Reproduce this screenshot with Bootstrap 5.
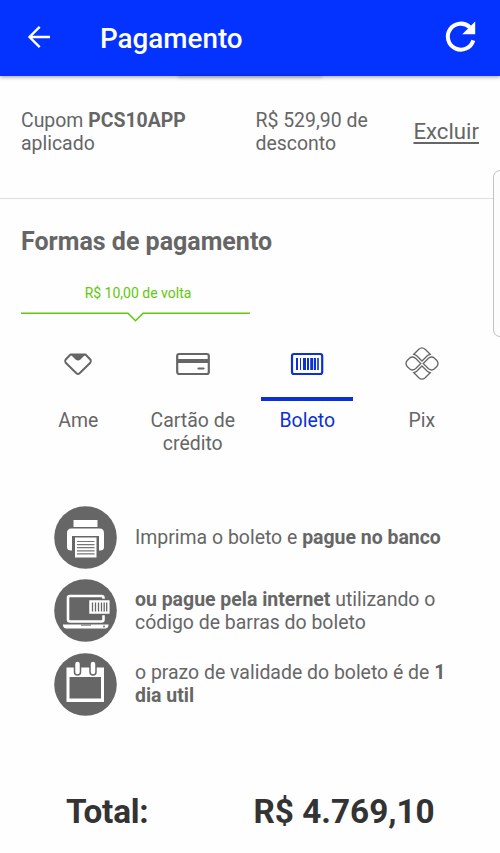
<!DOCTYPE html>
<html lang="pt-BR">
<head>
<meta charset="utf-8">
<meta name="viewport" content="width=device-width, initial-scale=1">
<title>Pagamento</title>
<link href="https://cdn.jsdelivr.net/npm/bootstrap@5.3.0/dist/css/bootstrap.min.css" rel="stylesheet">
<style>
body{font-family:Roboto,"Liberation Sans",sans-serif;font-size:19.45px;line-height:23px;color:#666;background:#fefefe;height:853px;overflow:hidden}
b{font-weight:700}
svg{display:block}
.topbar{height:75.5px;background:#0433ff;padding:0 23px 0 26px;box-shadow:0 1px 4px rgba(0,0,0,.4)}
.topbar h1{font-size:27.8px;font-weight:500;line-height:32px;margin:2px 0 0 48px}
.topbar .reload{margin-top:-1px}
.tab-shade{left:178px;top:75px;width:144px;height:3px;background:rgba(0,0,0,.16);filter:blur(1.5px)}
.coupon{height:123.5px;padding:33.4px 21px 0;border-bottom:1px solid #dedede}
.coupon-code{width:234.5px}
.coupon-off{width:158px}
.remove-link{font-size:22.2px;line-height:26px;color:#666;margin-top:9px;text-underline-offset:2.5px;text-decoration-thickness:1.5px}
.pay{padding:29px 21px 0}
.pay h2{font-size:25px;line-height:28px;font-weight:700;margin:0}
.cashback{width:229px;margin-top:29px;color:#63c70c;font-size:14px;line-height:16px}
.cashback span{padding-left:5px}
.methods{margin-top:20.5px}
.method{height:108px;color:#666}
.method-icon{height:55.5px;flex:none;border-bottom:4px solid transparent;width:80%}
.method.active{color:#0a31d8}
.method.active .method-icon{border-color:#0a31d8}
.steps{padding:47.2px 20px 0 54px}
.step{height:73.5px}
.step svg{margin-right:18px}
.total{font-size:33.3px;line-height:40px;font-weight:700;color:#333;margin-top:71.3px;padding-left:66px}
.total span:first-child{width:187.5px;letter-spacing:-.25px}
.edge-panel{left:493px;top:170px;width:20px;height:167px;border:1px solid #c2c2c2;border-radius:7px;background:#fcfcfc}
</style>
<script src="https://cdn.jsdelivr.net/npm/bootstrap@5.3.0/dist/js/bootstrap.bundle.min.js"></script>
</head>
<body class="position-relative">
<header class="topbar d-flex align-items-center text-white position-relative">
  <svg width="26" height="26" viewBox="0 0 26 26" fill="none" stroke="#fff" stroke-width="2.4"><path d="M24 12H3.500M13.700 1.800L3.500 12L13.700 22.200"/></svg>
  <h1>Pagamento</h1>
  <svg class="reload ms-auto" width="34" height="34" viewBox="0 0 34 34"><path d="M30.300 20.400A13 13 0 1 1 26.800 7.200" fill="none" stroke="#fff" stroke-width="4"/><path d="M32.200 1.500V14.200H19.200Z" fill="#fff"/></svg>
</header>
<div class="tab-shade position-absolute"></div>
<main>
  <section class="coupon d-flex align-items-start">
    <div class="coupon-code">Cupom <b>PCS10APP</b><br>aplicado</div>
    <div class="coupon-off">R$ 529,90 de<br>desconto</div>
    <a class="remove-link" href="#">Excluir</a>
  </section>
  <section class="pay">
    <h2>Formas de pagamento</h2>
    <div class="cashback text-center"><span>R$ 10,00 de volta</span>
      <svg class="mt-2" width="229" height="16" viewBox="0 0 229 16" fill="none" stroke="#63c70c" stroke-width="1.500"><path d="M0 4.300H107L114.500 11.800L122 4.300H229"/></svg>
    </div>
    <div class="methods row g-0 text-center">
      <div class="method col-3 d-flex flex-column align-items-center">
        <div class="method-icon d-flex justify-content-center"><svg width="36" height="36" viewBox="0 0 36 36"><path d="M10.500 8.500H25.500L30.500 13.800Q31.500 15.400 30.300 16.800L19.600 27.300Q18 28.600 16.400 27.300L5.700 16.800Q4.500 15.400 5.500 13.800Z" fill="none" stroke="currentColor" stroke-width="2" stroke-linejoin="round"/><path d="M10.500 8.500H25.500L20.500 13.500Q18 15.500 15.500 13.500Z" fill="currentColor"/></svg></div>
        <div class="mt-2">Ame</div>
      </div>
      <div class="method col-3 d-flex flex-column align-items-center">
        <div class="method-icon d-flex justify-content-center"><svg width="36" height="36" viewBox="0 0 36 36" fill="none" stroke="currentColor"><rect x="2.200" y="8" width="31.600" height="20" rx="2" stroke-width="2.200"/><path d="M2.500 15H33.500" stroke-width="4"/><path d="M23.500 22.500H28.500" stroke-width="2.200" stroke-linecap="round"/></svg></div>
        <div class="mt-2">Cartão de<br>crédito</div>
      </div>
      <div class="method active col-3 d-flex flex-column align-items-center">
        <div class="method-icon d-flex justify-content-center"><svg width="36" height="36" viewBox="0 0 36 36"><rect x="3" y="8" width="30.200" height="20" rx="2" fill="none" stroke="currentColor" stroke-width="2.200"/><path d="M7 12h2v12h-2zM11 12h1v12h-1zM14 12h3v12h-3zM18 12h2v12h-2zM21.200 12h3v12h-3zM25 12h2v12h-2zM28.200 12h1.600v12h-1.600z" fill="currentColor"/></svg></div>
        <div class="mt-2">Boleto</div>
      </div>
      <div class="method col-3 d-flex flex-column align-items-center">
        <div class="method-icon d-flex justify-content-center"><svg width="36" height="36" viewBox="0 0 36 36" fill="none" stroke="currentColor" stroke-width="1.300"><path id="petal" d="M9.800 8.300L14.800 3.200Q18 .500 21.200 3.200L26.200 8.300Q24.600 8.500 23.300 9.700L18 15L12.700 9.700Q11.400 8.500 9.800 8.300Z"/><use href="#petal" transform="rotate(180 18 17.500)"/><path id="leaf" d="M16.800 17.500L11.500 22.700Q8.300 25.300 5.500 22.800L3.200 20.500Q.800 17.500 3.200 14.500L5.500 12.200Q8.300 9.700 11.500 12.300Z"/><use href="#leaf" transform="rotate(180 18 17.500)"/></svg></div>
        <div class="mt-2">Pix</div>
      </div>
    </div>
  </section>
  <section class="steps">
    <div class="step d-flex align-items-center">
      <svg class="flex-shrink-0" width="63" height="63" viewBox="0 0 63 63"><circle cx="31.500" cy="31.500" r="31.300" fill="#666"/><g fill="#fff"><path d="M19.500 14H43.500V21H19.500ZM17.500 22.500H45.500Q50 22.500 50 27V41Q50 44.500 46 44.500H45V30H18V44.500H17Q13 44.500 13 41V27Q13 22.500 17.500 22.500Z"/><path d="M21 31.500H42.500V51.500H21Z"/></g><path d="M23 35.500H40.500M23 38.600H40.500M23 41.700H40.500M23 44.800H40.500M23 47.900H40.500" stroke="#777" stroke-width="1.200"/></svg>
      <div>Imprima o boleto e <b>pague no banco</b></div>
    </div>
    <div class="step d-flex align-items-center">
      <svg class="flex-shrink-0" width="63" height="63" viewBox="0 0 63 63"><circle cx="31.500" cy="31.500" r="31.300" fill="#666"/><rect x="14" y="17" width="35.500" height="25.500" rx="2" fill="none" stroke="#fff" stroke-width="2.600"/><path d="M9 45.500H54.500V46.500Q54 49.500 51 49.500H12.500Q9.500 49.500 9 46.500Z" fill="#fff"/><path d="M27 45.500H37V46.700H27Z" fill="#777"/><circle cx="50" cy="47.500" r=".9" fill="#666"/><rect x="34.500" y="20.500" width="21.800" height="15" fill="#fff" stroke="#666" stroke-width="1.500"/><path d="M38.500 23.500V32.500M41.500 23.500V32.500M44.500 23.500V32.500M47.500 23.500V32.500M50.200 23.500V32.500M52.700 23.500V32.500" stroke="#666" stroke-width="1.300"/></svg>
      <div><b>ou pague pela internet</b> utilizando o<br>código de barras do boleto</div>
    </div>
    <div class="step d-flex align-items-center">
      <svg class="flex-shrink-0" width="63" height="63" viewBox="0 0 63 63"><circle cx="31.500" cy="31.500" r="31.300" fill="#666"/><path fill-rule="evenodd" d="M12.500 14.500H50V49H12.500ZM15.500 24H47V45.500H15.500Z" fill="#fff"/><g fill="#fff" stroke="#666" stroke-width="1.500"><rect x="20.500" y="8" width="6" height="14" rx="3"/><rect x="36" y="8" width="6" height="14" rx="3"/></g></svg>
      <div>o prazo de validade do boleto é de <b>1<br>dia util</b></div>
    </div>
  </section>
  <section class="total d-flex"><span>Total:</span><span>R$ 4.769,10</span></section>
</main>
<div class="edge-panel position-absolute"></div>
</body>
</html>
